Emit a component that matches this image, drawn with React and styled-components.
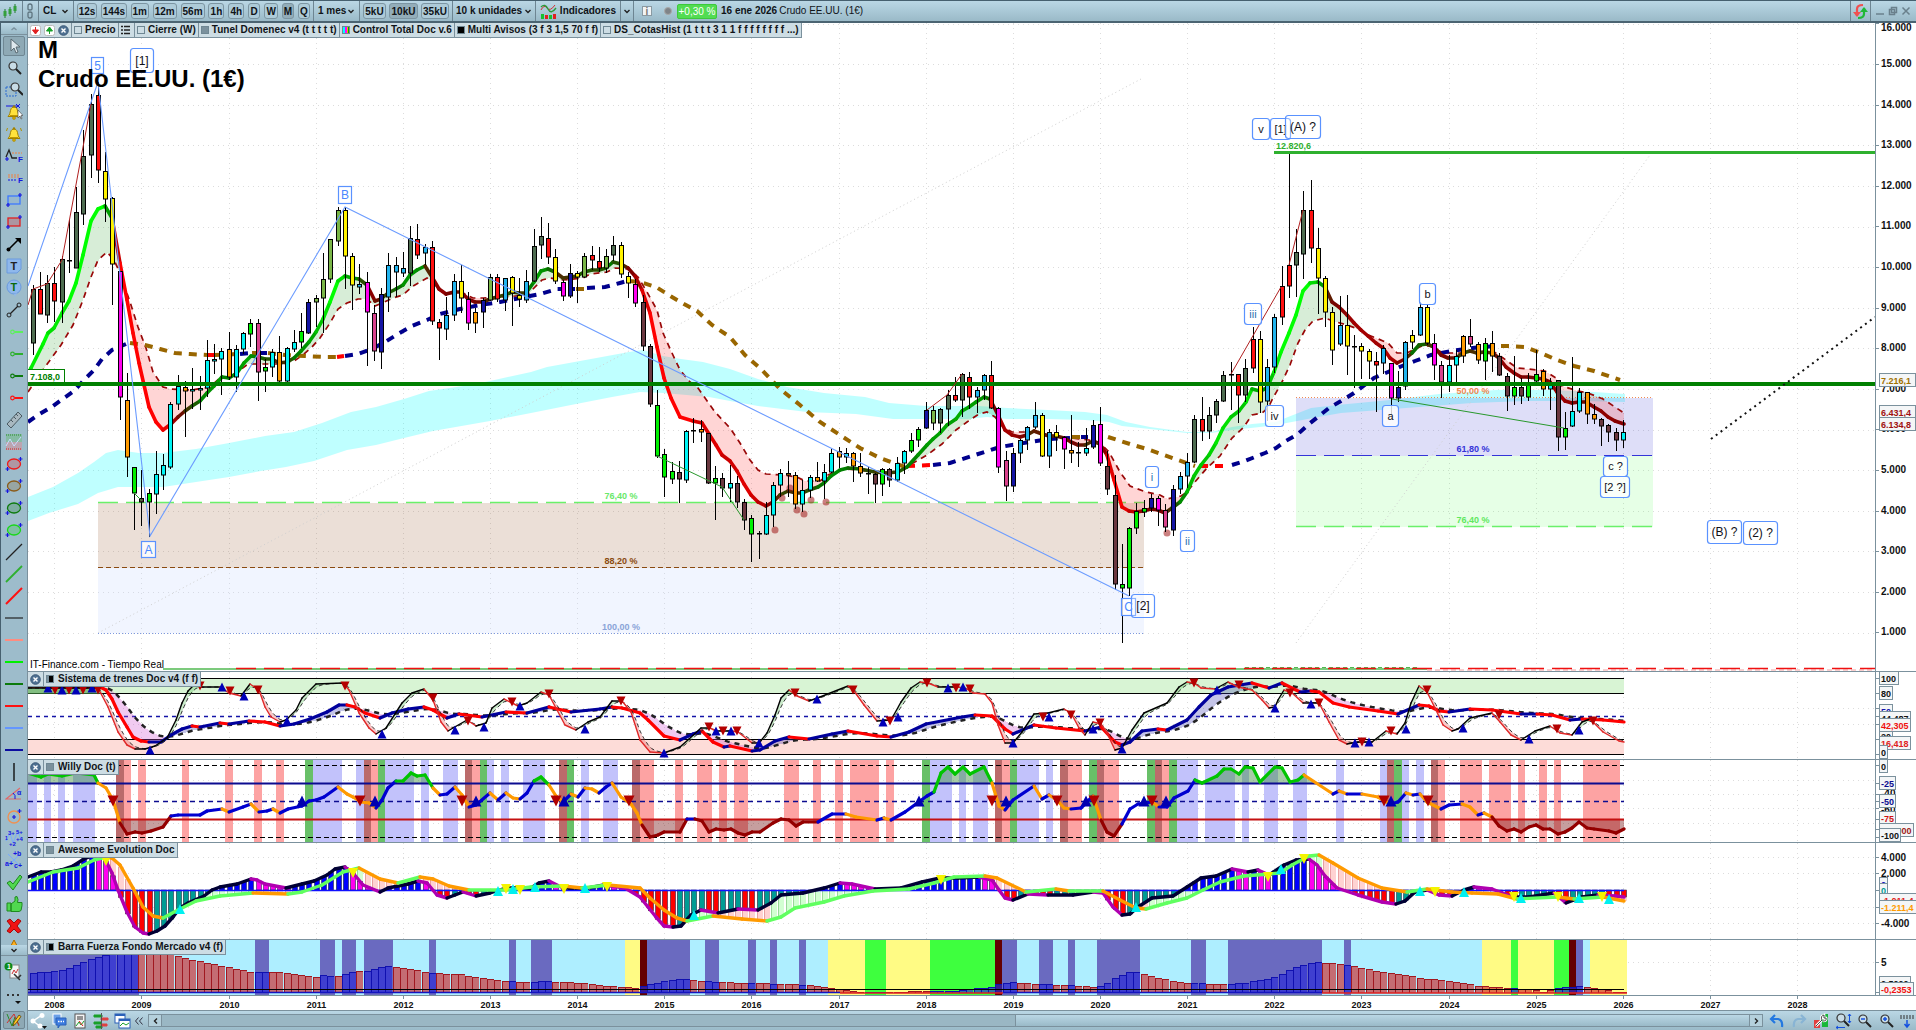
import React from "react";
import styled, { createGlobalStyle, css } from "styled-components";

const Global = createGlobalStyle`
  * { box-sizing: border-box; }
  body { margin: 0; overflow: hidden; background: #9dbccb; }
  button, select { font: inherit; color: inherit; margin: 0; }
`;

const FONT = '"Liberation Sans", Arial, sans-serif';
const EDGE = "#7b919d";

/* ---------- time scale ---------- */
const X0 = 55.3;
const MONTH = 7.262;
const mx = (k) => Math.round(X0 + MONTH * k);
const FIRST = -3;
const LAST = 216;
const END = mx(LAST);
const YEARS = Array.from({ length: 21 }, (_, i) => 2008 + i);

const parse = (s) => s.trim().split(/\s+/).map((p) => p.split(",").map(Number));
const toPoly = (a) => a.map((p) => p.join(",")).join(" ");
const at = (pts, x) => {
  if (x <= pts[0][0]) return pts[0][1];
  for (let i = 1; i < pts.length; i++) {
    if (x <= pts[i][0]) {
      const [x0, y0] = pts[i - 1];
      const [x1, y1] = pts[i];
      return x1 === x0 ? y1 : y0 + ((y1 - y0) * (x - x0)) / (x1 - x0);
    }
  }
  return pts[pts.length - 1][1];
};

/* ---------- price data: wick top, body top, body bottom, wick bottom, colour ---------- */
const CANDLE_COLORS = {
  g: "#4e6c50", r: "#ff1010", y: "#fff200", m: "#ff00f0", o: "#ff9a00", l: "#00f000",
  p: "#6b3840", c: "#00f4f4", k: "#d8428c", b: "#1414a4", s: "#22b4ee", e: "#7ab648",
};
const CANDLES = `285 289 343 355 g,272 289 314 314 r,275 283 315 323 g,267 283 301 322 r,256 259 302 323 g,220 260 261 273 g,187 212 268 268 g,130 156 214 225 g,94 104 155 178 g,82 95 170 183 r,152 171 199 222 y,197 198 264 305 y,271 271 397 420 m,373 400 457 477 o,467 467 493 530 l,470 498 502 526 p,489 493 502 537 l,451 474 494 514 c,454 465 475 490 c,402 404 467 469 c,375 386 404 410 c,381 387 391 437 o,368 389 391 409 c,376 388 390 410 c,
340 360 388 397 c,344 359 361 374 c,348 351 359 395 c,332 349 377 380 o,345 349 377 392 c,332 333 349 354 c,319 323 334 347 l,319 323 372 401 k,359 367 371 392 l,349 352 367 377 c,336 352 381 383 o,347 348 381 383 c,330 342 349 352 c,313 331 342 348 l,299 302 333 334 b,295 298 302 327 e,253 279 298 333 e,239 239 279 283 e,207 210 241 246 e,207 210 256 289 y,253 256 285 310 y,264 284 287 294 s,272 282 312 366 m,305 313 351 361 k,288 294 352 369 b,253 265 297 312 s,257 265 272 297 s,252 268 273 277 s,226 238 273 286 g,224 239 255 259 r,244 247 253 265 s,
241 247 321 325 r,319 322 328 360 r,297 315 329 340 s,274 281 315 321 s,265 281 298 313 y,292 299 323 330 m,308 312 323 333 o,298 300 312 328 b,274 277 300 301 e,274 277 299 302 r,278 278 300 311 s,276 277 293 326 y,278 295 299 307 y,270 281 300 303 s,229 246 281 282 g,217 236 245 259 g,223 238 257 264 r,249 257 281 284 y,280 282 296 301 m,264 273 296 298 b,271 273 277 303 y,253 256 277 278 e,246 255 260 270 r,247 261 268 272 r,249 256 268 273 e,236 245 255 261 g,242 245 274 278 y,272 276 283 298 y,279 284 303 307 m,295 302 346 351 p,344 346 404 407 p,390 405 456 458 l,
449 454 477 497 l,462 471 479 484 l,461 472 479 503 p,430 431 480 483 c,418 430 431 443 g,420 429 432 442 o,433 433 483 484 p,466 478 483 520 l,473 478 488 497 p,465 483 488 502 c,476 483 502 508 p,499 502 520 530 p,515 518 534 562 l,531 533 534 559 g,502 515 534 535 c,482 485 515 527 c,469 473 485 497 c,461 473 475 497 o,472 475 504 509 o,480 490 504 512 c,475 477 490 498 c,462 477 481 482 o,464 472 481 499 c,449 453 472 473 c,447 451 457 468 o,448 453 457 463 c,452 453 466 482 o,453 466 473 477 o,467 473 474 494 g,473 474 484 503 p,468 469 484 496 l,468 469 480 487 p,457 463 480 482 c,450 451 463 474 c,433 440 451 453 l,427 429 440 447 l,
402 410 428 429 b,406 410 423 430 e,408 409 423 433 g,390 395 409 426 g,377 395 400 402 r,373 374 400 417 g,372 377 397 409 r,387 390 397 413 s,374 375 390 400 s,361 375 408 409 r,407 408 467 473 m,451 460 486 501 k,448 453 486 492 b,439 440 453 463 s,426 427 440 450 s,402 415 427 429 s,413 415 456 457 y,429 432 456 468 s,425 432 437 451 y,436 437 449 469 m,415 450 453 463 o,442 452 453 467 g,428 448 453 456 c,420 425 447 449 b,407 424 463 466 m,451 466 489 495 p,475 495 584 590 p,544 584 588 643 l,527 528 588 596 l,503 511 528 534 l,500 508 512 517 l,494 498 508 512 b,496 498 510 526 m,504 510 527 532 k,485 489 530 536 b,472 476 489 494 s,
453 462 476 488 s,415 419 462 463 g,397 419 431 441 r,407 415 431 439 g,399 401 415 423 g,371 375 401 402 g,362 374 375 410 g,374 374 395 423 r,359 368 395 402 g,327 339 368 373 r,331 339 402 413 y,359 367 401 421 s,314 317 367 373 s,266 286 317 325 r,154 265 286 298 r,229 252 265 297 g,191 210 254 279 g,180 210 248 263 r,228 248 278 314 y,276 278 312 327 y,307 312 350 365 y,296 325 344 346 s,295 325 346 375 y,335 346 347 388 g,343 346 351 379 y,349 351 361 379 y,352 361 365 412 r,345 348 363 374 s,363 363 398 415 m,371 387 398 402 b,341 342 386 390 s,330 335 342 349 y,302 307 335 336 s,304 307 343 345 y,334 343 365 380 m,361 365 382 398 k,
355 365 382 392 c,350 356 365 382 c,335 336 356 363 o,319 336 344 347 k,342 344 360 364 o,338 343 361 380 l,331 343 356 372 o,353 356 375 376 p,373 376 396 411 p,356 387 396 405 l,378 387 396 404 p,373 385 397 401 l,350 374 381 383 l,369 371 389 396 o,378 384 389 410 c,380 380 437 451 p,412 428 437 450 l,357 411 426 427 c,388 392 411 413 c,392 392 414 424 o,404 414 419 424 o,418 419 426 446 p,424 425 432 442 p,428 432 440 451 p,420 432 440 448 c`
  .split(",")
  .map((r) => {
    const [wt, bt, bb, wb, c] = r.trim().split(/\s+/);
    return { wt: +wt, bt: +bt, bb: +bb, wb: +wb, c };
  });

const MA = parse(`28,374 31,368 43,344 48,333 54,328 62,313 69,301 76,283 83,255 91,221 98,209 105,206 112,218 120,263 127,300 133,333 139,363 149,407 156,422 163,430 171,424 178,417 185,411 192,406 200,401 207,393 214,386 222,377 229,378 237,373 244,363 251,356 258,357 265,359 272,359 279,363 287,362 294,358 301,351 309,342 316,332 323,319 330,302 338,281 345,276 352,278 359,279 367,285 375,301 381,299 388,293 396,289 403,285 410,275 417,270 425,266 432,277 439,289 446,294 454,292 461,292 468,299 475,302 483,302 490,299 497,297 505,295 512,292 519,293 526,293 534,282 541,271 548,269 555,272 563,278 570,277 577,276 584,272 592,270 599,270 606,268 613,262 621,264 628,268 635,276 642,290 650,313 657,347 664,378 671,398 680,417 693,421 702,423 709,434 716,445 722,455 730,461 737,471 744,484 751,495 758,502 766,506 773,502 780,495 788,491 796,493 802,493 809,490 818,487 824,483 831,476 840,470 848,468 860,469 875,472 885,473 898,472 907,467 918,455 927,445 933,439 940,433 947,425 956,419 962,411 969,407 976,402 984,397 990,399 998,415 1005,430 1012,435 1020,437 1027,435 1034,431 1042,434 1049,436 1056,436 1064,438 1071,442 1078,445 1085,445 1093,441 1100,444 1107,455 1114,480 1122,507 1129,511 1136,512 1143,511 1151,509 1158,510 1165,513 1172,508 1180,502 1187,492 1194,476 1201,465 1209,455 1216,443 1223,428 1231,417 1239,411 1246,402 1252,389 1260,391 1267,388 1274,372 1281,352 1289,333 1296,315 1303,291 1310,283 1318,282 1325,287 1332,302 1339,307 1347,315 1354,323 1361,330 1368,336 1376,343 1383,348 1390,358 1397,363 1405,359 1412,353 1419,345 1427,344 1434,347 1441,355 1448,358 1456,358 1463,353 1470,351 1477,353 1485,352 1492,353 1499,358 1506,367 1514,373 1521,377 1528,377 1543,379 1550,382 1557,392 1565,401 1572,403 1579,402 1586,402 1594,407 1601,411 1608,417 1615,421 1624,424`);
const MA_DASH = parse(`28,392 45,367 61,345 73,325 83,300 91,277 98,260 107,252 114,260 120,273 130,302 138,327 146,348 153,372 163,387 171,389 192,390 210,387 220,378 230,378 240,370 248,364 283,364 294,361 303,355 312,347 320,338 330,323 338,309 347,303 358,299 367,299 375,306 382,303 393,298 403,295 413,286 427,278 432,282 439,290 446,294 461,292 473,298 483,298 505,297 527,295 534,288 542,280 550,278 563,280 583,278 590,274 607,272 615,268 628,269 638,277 647,292 657,310 663,333 672,353 680,370 690,382 698,388 710,405 715,412 730,428 740,443 750,460 758,470 766,474 783,475 797,477 805,481 820,481 828,475 840,470 848,469 875,472 898,473 913,463 927,455 942,444 956,430 967,422 979,414 987,412 995,417 1003,427 1012,432 1034,432 1049,435 1064,437 1079,439 1089,440 1100,443 1109,452 1120,472 1130,486 1146,492 1160,495 1167,499 1181,496 1187,492 1194,483 1207,468 1220,456 1232,438 1243,428 1252,415 1262,413 1268,408 1273,398 1282,382 1290,365 1298,343 1305,330 1313,321 1325,318 1333,321 1347,325 1358,329 1368,335 1376,338 1388,343 1397,353 1407,353 1413,350 1422,346 1430,346 1443,353 1460,353 1470,352 1493,351 1503,358 1517,368 1528,369 1545,371 1556,378 1562,386 1578,391 1588,393 1603,399 1615,407 1624,413`);
const TREND = [
  ["n", "28,422 38,415 53,406 64,398 74,391 84,380 94,370 102,359 112,350 126,344"],
  ["d", "130,343 145,345 160,349 175,353 190,354 207,355"],
  ["r", "207,355 214,355"],
  ["d", "214,355 240,354"],
  ["n", "240,354 252,353"],
  ["d", "252,353 260,353"],
  ["n", "260,353 267,353"],
  ["d", "268,353 285,355 305,356 325,357 337,357"],
  ["r", "337,357 344,356"],
  ["n", "345,356 358,354 372,349 385,342 398,334 412,326 427,320 440,314 460,309 480,305 500,302 520,298 540,294 557,289 575,289"],
  ["d", "576,289 586,289"],
  ["n", "587,288 605,287 620,283 627,281"],
  ["d", "629,281 640,282 656,287 672,297 684,304 697,311 712,325 730,337 745,355 762,370 780,389 800,405 820,422 840,435 860,448 880,458 905,467"],
  ["r", "907,466 933,465"],
  ["n", "933,465 950,463 975,455 1000,447 1030,442 1050,439 1070,438"],
  ["d", "1072,437 1080,437"],
  ["n", "1081,437 1088,437"],
  ["d", "1108,437 1130,444 1150,450 1175,459 1195,466"],
  ["r", "1200,466 1225,466"],
  ["n", "1232,465 1245,461 1265,453 1276,448 1284,442 1298,434 1309,424 1319,416 1329,408 1341,401 1354,393 1374,378 1388,372 1402,366 1415,361 1431,355 1451,351 1480,347 1498,346"],
  ["d", "1501,346 1509,346 1525,347 1541,353 1557,360 1574,366 1594,371 1620,380"],
];
const TREND_COLORS = { n: "#00008c", d: "#996600", r: "#ff0000" };
const BAND_TOP = parse(`28,497 53,487 78,473 94,462 106,453 118,450 139,453 163,453 196,449 229,443 265,436 294,432 322,423 351,412 376,407 404,399 429,391 470,385 490,381 531,372 547,367 580,361 629,352 643,350 663,356 681,359 703,362 730,369 758,379 787,387 824,393 865,397 889,403 926,406 979,406 1007,408 1048,410 1085,412 1107,415 1126,422 1150,427 1187,432 1211,432 1232,427 1252,424 1276,422 1288,417 1311,408 1337,405 1390,400 1439,394 1496,390 1554,390 1594,392 1625,394`);
const BAND_BOTTOM = parse(`28,521 49,513 78,504 98,493 118,487 163,487 196,482 229,477 261,471 286,467 314,461 347,450 376,445 404,438 433,431 490,421 531,413 571,405 612,397 640,392 664,393 709,397 730,401 758,406 807,412 856,414 893,419 967,419 987,417 1007,419 1048,419 1085,420 1109,422 1122,426 1187,433 1211,433 1232,430 1260,427 1276,425 1313,418 1341,413 1419,407 1472,403 1529,401 1582,401 1625,402`);
const DOTS = parse("782,498 790,488 797,510 804,514 811,500 826,502 775,530 1167,533");

/* ---------- oscillator data ---------- */
const TRAIN_SLOW = parse(`28,686 100,687 106,690 112,699 118,712 127,727 133,737 141,741 149,742 161,742 171,735 182,729 192,726 200,727 220,723 229,724 249,721 265,722 280,726 294,724 310,719 327,712 339,705 347,705 355,707 365,713 380,718 392,713 408,709 424,707 433,710 447,718 459,714 482,717 506,712 527,713 549,707 571,712 600,709 612,707 622,708 640,713 648,720 664,736 680,740 693,734 702,731 713,742 724,747 730,746 752,751 760,750 775,741 789,737 809,739 832,734 848,731 877,736 891,737 909,732 926,724 962,717 975,715 992,716 1005,729 1013,734 1034,725 1056,728 1085,731 1101,727 1115,742 1122,745 1130,742 1142,731 1158,729 1167,730 1187,720 1199,707 1211,695 1228,687 1252,683 1269,688 1282,683 1300,692 1311,691 1319,692 1333,703 1349,707 1378,711 1398,714 1419,705 1429,706 1439,711 1449,712 1470,709 1492,710 1521,714 1537,714 1552,715 1570,720 1582,719 1603,720 1624,722`);
const TRAIN_FAST = parse(`28,688 98,688 108,707 118,732 127,745 135,749 145,749 155,746 167,738 176,720 182,703 188,691 194,685 202,687 220,687 229,693 241,696 250,684 259,690 265,707 271,717 280,722 286,720 296,710 302,698 316,684 343,683 349,690 359,713 369,728 376,734 386,728 402,703 412,693 424,689 433,700 441,722 448,731 453,728 467,720 476,726 486,723 492,708 504,699 512,703 518,706 527,703 541,692 549,695 557,710 565,725 576,730 588,722 600,717 612,701 622,701 631,712 640,740 650,752 664,753 680,747 689,739 701,728 710,728 716,731 731,731 738,732 752,743 759,743 767,733 775,715 781,698 789,690 797,696 809,701 820,697 848,686 854,691 864,705 877,721 891,720 901,702 911,688 920,682 928,683 938,687 958,687 967,689 973,693 985,694 992,703 998,725 1005,743 1013,743 1022,732 1034,714 1048,713 1064,709 1071,713 1079,728 1085,735 1093,722 1101,724 1107,733 1115,750 1122,748 1132,730 1144,713 1167,703 1179,687 1187,682 1194,683 1201,688 1215,689 1228,682 1238,687 1252,690 1262,700 1269,708 1275,707 1278,700 1284,690 1292,693 1303,703 1319,703 1329,722 1339,740 1347,744 1358,742 1372,742 1386,731 1397,734 1405,723 1411,703 1419,686 1427,692 1435,708 1443,725 1452,731 1458,729 1470,718 1492,713 1500,722 1511,735 1521,740 1535,731 1550,726 1560,733 1572,735 1582,722 1590,719 1603,732 1619,741 1624,742`);
const TRAIN_DOWN = parse("55,690 69,690 83,690 98,690 200,686 230,691 258,690 345,686 433,698 468,721 512,702 549,694 621,701 709,727 723,731 737,731 795,693 853,690 890,721 927,683 956,688 970,689 1043,717 1071,715 1100,723 1194,683 1239,685 1290,693 1319,703 1391,731 1362,742 1427,690 1499,715 1557,729 1593,721");
const TRAIN_UP = parse("48,688 62,690 76,690 92,688 222,687 244,696 287,721 150,750 382,734 455,730 484,727 520,706 585,729 664,753 716,731 731,731 759,743 817,699 883,722 898,717 948,688 963,687 1013,743 1049,717 1093,729 1122,749 1217,690 1275,708 1311,704 1355,743 1369,742 1406,729 1463,728 1529,739 1579,730");

const WILLY = parse(`28,773 41,777 48,774 62,776 76,773 94,775 98,783 106,788 113,800 120,823 127,834 135,832 142,833 151,831 163,827 171,816 178,815 200,815 207,811 222,809 229,812 243,807 251,804 259,812 267,811 273,809 280,813 288,809 302,806 309,801 316,800 324,797 338,787 347,794 353,797 361,802 369,803 376,808 382,800 388,788 396,781 403,781 411,773 417,776 425,775 433,788 440,795 447,794 455,787 462,795 469,807 476,805 490,793 498,800 506,793 513,798 520,799 527,793 534,781 541,777 549,785 556,796 563,802 571,794 578,797 585,788 592,789 599,793 606,787 612,783 621,797 631,804 637,813 642,825 650,837 658,835 664,832 680,832 687,819 695,819 702,821 709,832 716,829 724,830 731,829 738,833 745,835 752,832 760,832 773,823 781,819 789,820 796,826 803,822 818,822 832,814 846,814 856,817 877,820 884,818 891,820 905,812 920,801 927,796 934,792 941,773 948,767 955,774 963,767 970,774 984,767 992,783 999,806 1005,810 1013,800 1034,786 1042,799 1049,795 1057,800 1064,808 1071,809 1081,808 1093,796 1101,820 1107,832 1114,836 1122,824 1130,809 1138,804 1152,802 1159,807 1167,807 1174,798 1188,791 1195,780 1202,783 1217,776 1224,769 1231,769 1239,774 1245,767 1253,768 1260,782 1275,767 1282,768 1290,782 1298,780 1304,775 1333,794 1339,791 1347,794 1362,794 1378,797 1390,804 1398,802 1406,793 1413,795 1420,794 1427,802 1441,809 1449,805 1462,804 1470,807 1478,815 1484,813 1492,817 1499,826 1507,831 1514,829 1521,832 1529,827 1536,825 1543,829 1550,829 1558,834 1565,832 1572,828 1579,822 1587,828 1594,829 1609,831 1616,833 1624,829`);
const WILLY_COLORS = { v: "#c2c2fb", p: "#fda3a3", d: "#bb6b6b", g: "#68c068" };
const WILLY_BANDS = `v 28 37,v 44 51,v 58 65,v 73 95,d 116 124,p 124 131,p 138 146,p 182 189,p 225 233,p 254 262,p 276 284,g 305 313,v 313 342,v 356 364,d 364 371,p 371 378,g 378 385,v 385 414,v 421 429,v 443 458,d 465 472,p 472 480,g 480 487,v 487 494,v 501 509,v 523 545,d 559 567,g 567 574,v 581 589,v 603 618,d 632 640,p 640 654,p 675 683,p 697 712,p 719 727,p 734 748,p 784 799,p 813 821,p 835 843,p 850 879,p 886 894,g 922 930,v 930 952,v 959 966,v 973 988,d 995 1002,p 1002 1010,g 1010 1017,v 1017 1039,v 1046 1053,d 1060 1068,p 1068 1082,g 1089 1097,d 1097 1104,p 1104 1119,g 1147 1155,d 1155 1162,p 1162 1169,g 1169 1177,v 1177 1198,v 1205 1235,v 1242 1249,v 1264 1278,v 1293 1307,v 1336 1344,v 1380 1387,d 1387 1394,g 1394 1402,v 1402 1409,v 1416 1424,d 1431 1438,p 1438 1445,p 1460 1482,p 1489 1511,p 1518 1525,p 1539 1547,p 1554 1561,p 1583 1620`
  .split(",")
  .map((b) => b.split(" "));
const WILLY_DOWN = [113, 360, 462, 556, 629, 992, 1057, 1094, 1152, 1384, 1428];
const WILLY_UP = [302, 375, 476, 564, 919, 1006, 1086, 1144, 1166, 1391];

const AO = parse(`28,877 41,872 51,872 61,870 73,866 84,859 94,855 104,857 112,873 118,890 127,912 135,927 143,933 149,934 157,931 165,926 173,917 180,908 188,903 204,896 212,890 220,887 237,884 251,879 257,880 265,884 286,888 302,884 314,881 327,875 335,869 345,867 353,873 363,885 380,892 388,888 408,884 418,881 427,883 437,895 447,898 455,895 463,892 476,896 490,893 506,888 531,888 539,883 549,881 563,888 588,888 604,885 625,888 640,897 648,907 656,917 664,926 673,927 681,926 691,915 701,910 718,913 738,909 758,910 771,903 781,895 803,893 824,888 840,883 852,884 875,889 901,888 922,882 940,878 958,878 979,877 992,880 999,890 1005,898 1013,900 1028,894 1048,895 1073,895 1093,892 1103,893 1113,907 1122,915 1130,914 1138,907 1152,898 1173,896 1187,887 1201,878 1216,876 1232,869 1248,872 1258,870 1269,875 1284,865 1296,860 1309,859 1317,865 1325,876 1337,888 1358,895 1382,902 1396,904 1405,901 1415,892 1427,890 1439,895 1452,896 1464,890 1474,887 1492,889 1513,897 1529,897 1554,893 1566,903 1582,897 1598,895 1615,896 1624,897`);
const AO_SIGNAL = parse(`28,882 53,872 78,868 94,860 106,857 112,858 120,865 133,888 143,907 153,916 163,918 178,910 196,901 220,896 253,893 288,894 302,892 322,885 343,872 359,868 380,879 398,883 420,877 433,879 449,886 469,890 506,890 531,887 563,886 582,888 608,885 640,888 650,898 664,910 677,918 687,921 713,916 742,919 767,921 781,917 795,908 824,902 844,896 873,891 909,889 934,883 954,877 985,876 997,878 1026,892 1056,889 1069,891 1103,891 1120,900 1136,908 1146,909 1167,903 1187,898 1203,890 1220,882 1244,876 1269,874 1280,873 1292,865 1309,856 1319,855 1333,863 1358,878 1382,888 1407,892 1427,889 1452,892 1472,893 1498,894 1517,899 1558,897 1574,899 1603,897 1624,901`);
const AO_DOWN = parse("106,861 353,873 506,889 520,890 564,889 607,887 941,880 1268,877 1304,859 1435,892 1514,897 1558,897 1602,897");
const AO_UP = parse("180,909 498,891 513,889 535,887 585,888 694,915 1136,907 1281,869 1420,891 1464,892 1521,898 1579,898 1609,899");

const FORCE = parse(`28,974 62,970 78,965 86,961 106,955 130,953 171,954 184,958 204,962 229,967 253,972 280,972 302,975 316,977 322,975 339,976 351,972 367,971 388,966 412,969 429,973 461,974 482,978 502,981 527,982 547,981 580,983 612,986 640,988 644,986 664,981 685,979 705,981 746,983 795,984 820,986 844,989 860,992 958,991 967,989 991,987 1003,983 1013,982 1036,984 1069,985 1097,987 1109,983 1118,977 1128,972 1138,972 1154,977 1187,983 1224,984 1244,983 1277,977 1284,973 1300,966 1319,962 1345,964 1374,970 1403,975 1431,979 1456,982 1482,986 1509,988 1529,989 1547,992 1554,988 1582,986 1598,988 1619,992 1624,992`);
const FORCE_COLORS = { p: "#6a6ac0", l: "#aeeeff", y: "#fffb84", g: "#3eff3e", d: "#640000" };
const FORCE_BANDS = `p 28 139,l 139 255,p 255 269,l 269 320,p 320 335,l 335 342,p 342 356,l 356 364,p 364 393,l 393 429,p 429 436,l 436 509,p 509 516,l 516 531,p 531 552,l 552 625,y 625 640,d 640 647,p 647 690,l 690 705,p 705 719,l 719 748,p 748 756,l 756 770,p 770 777,l 777 799,p 799 806,l 806 828,y 828 865,g 865 886,y 886 930,g 930 995,d 995 1002,p 1002 1017,l 1017 1039,p 1039 1053,l 1053 1068,p 1068 1075,l 1075 1097,p 1097 1140,l 1140 1191,p 1191 1206,l 1206 1228,p 1228 1322,l 1322 1344,p 1344 1351,l 1351 1482,y 1482 1511,g 1511 1518,y 1518 1554,g 1554 1569,d 1569 1576,p 1576 1583,l 1583 1590,y 1590 1627`
  .split(",")
  .map((b) => b.split(" "));

/* ---------- layout ---------- */
const Page = styled.div`
  display: flex;
  flex-direction: column;
  height: 100vh;
  font: bold 10px/12px ${FONT};
  color: #101418;
  background: #9dbccb;
`;
const bar = css`
  display: flex;
  align-items: center;
  background: linear-gradient(#bad7e5, #9abac8);
`;
const TopBar = styled.header`
  ${bar}
  height: 23px;
  flex: none;
  border-top: 1px solid #46606f;
  border-bottom: 2px solid #4b6472;
`;
const Group = styled.div`
  display: flex;
  align-items: center;
  height: 100%;
  flex: none;
  justify-content: ${(p) => (p.$start ? "flex-start" : "space-between")};
  width: ${(p) => p.$w}px;
  padding: 0 ${(p) => (p.$pad === undefined ? 4 : p.$pad)}px;
  border-right: 1px solid ${(p) => (p.$plain ? "transparent" : "#6d8592")};
  white-space: nowrap;
`;
const TimeButton = styled.button`
  height: 16px;
  padding: 0;
  flex: none;
  width: ${(p) => p.$w}px;
  border: 1px solid #7c95a2;
  border-radius: 3px;
  background: ${(p) => (p.$on ? "#93adb9" : "#aecbd8")};
  line-height: 13px;
  display: flex;
  justify-content: center;
  align-items: center;
`;
const MenuButton = styled.button`
  display: flex;
  align-items: center;
  justify-content: ${(p) => (p.$center ? "center" : "space-between")};
  width: 100%;
  border: 0;
  padding: 0;
  background: none;
  white-space: nowrap;

  svg {
    flex: none;
  }
`;
const Spacer = styled.div`
  flex: 1;
`;
const Change = styled.span`
  flex: none;
  width: 40px;
  height: 15px;
  line-height: 13px;
  text-align: center;
  color: #fff;
  font-weight: normal;
  background: #52dc52;
  border: 1px solid #3cc83c;
  border-radius: 2px;
`;
const Plain = styled.span`
  font-weight: normal;
`;
const InfoMark = styled.span`
  flex: none;
  width: 10px;
  height: 10px;
  margin-right: 12px;
  border: 1px solid #8a9aa2;
  background: #f2f4f5;
  color: #777;
  text-align: center;
  line-height: 9px;
`;
const StateDot = styled.span`
  flex: none;
  width: 8px;
  height: 8px;
  margin-right: 5px;
  border-radius: 50%;
  background: #7f8488;
  border: 1px solid #a9a9a9;
`;
const DateText = styled.time`
  margin: 0 2px 0 4px;
`;
const IconButton = styled.button`
  display: flex;
  align-items: center;
  justify-content: center;
  flex: none;
  width: ${(p) => p.$w || 22}px;
  height: ${(p) => p.$h || 20}px;
  padding: 0;
  border: 1px solid ${(p) => (p.$on ? "#6f8793" : "transparent")};
  border-radius: 2px;
  background: ${(p) => (p.$on ? "#8ea9b5" : "none")};
`;
const Body = styled.div`
  display: flex;
  flex: 1;
  min-height: 0;
`;
const SideBar = styled.nav`
  display: flex;
  flex-direction: column;
  align-items: center;
  flex: none;
  width: 28px;
  border-left: 1px solid #46606f;
  border-right: 1px solid ${EDGE};
  background: #9dbccb;
`;
const ToolList = styled.div`
  display: flex;
  flex-direction: column;
  align-items: center;
  flex: 1;
  min-height: 0;
  overflow: hidden;
  gap: 2px;
  padding-top: 1px;
`;
const SideStrip = styled.div`
  ${bar}
  flex: none;
  width: 100%;
  height: ${(p) => p.$h}px;
  justify-content: center;
  border-bottom: 1px solid ${(p) => (p.$plain ? "transparent" : EDGE)};
  ${(p) => p.$plain && "background: none;"}
`;
const Main = styled.main`
  display: flex;
  flex-direction: column;
  flex: 1;
  min-width: 0;
`;
const Row = styled.section`
  position: relative;
  display: flex;
  background: #fff;
  min-height: 0;
  ${(p) => (p.$h ? `flex: none; height: ${p.$h}px; border-top: 1px solid ${EDGE};` : "flex: 1;")}
`;
const Plot = styled.svg`
  display: block;
  flex: 1;
  min-width: 0;
  height: 100%;
  overflow: hidden;
`;
const Scale = styled.svg`
  display: block;
  flex: none;
  width: 41px;
  height: 100%;
  overflow: hidden;
`;
const Tabs = styled.div`
  position: absolute;
  top: 0;
  left: 0;
  display: flex;
  height: 15px;
  border-bottom: 1px solid ${EDGE};
  background: #cddde4;
  white-space: nowrap;
`;
const Tab = styled.div`
  display: flex;
  align-items: center;
  gap: 3px;
  padding: 0 2px;
  flex: none;
  width: ${(p) => (p.$w ? `${p.$w}px` : "auto")};
  border-right: 1px solid ${EDGE};
`;
const CloseTab = styled.button`
  display: flex;
  align-items: center;
  justify-content: center;
  width: 16px;
  padding: 0;
  border: 0;
  border-right: 1px solid ${EDGE};
  background: none;
`;
const PanelTitle = styled.div`
  display: flex;
  align-items: center;
  gap: 4px;
  padding: 0 2px;
  border-right: 1px solid ${EDGE};
`;
const Swatch = styled.span`
  flex: none;
  width: 8px;
  height: 8px;
  border: 1px solid #6f8793;
  background: ${(p) => p.$fill || "transparent"};
`;
const Heading = styled.h1`
  position: absolute;
  top: 12px;
  left: 10px;
  margin: 0;
  font: bold 24px/29px ${FONT};
  color: #000;
  pointer-events: none;
`;
const Credit = styled.div`
  position: absolute;
  left: 2px;
  bottom: 0;
  font-weight: normal;
  color: #000;
`;
const TimeRow = styled.div`
  display: flex;
  flex: none;
  height: 15px;
  background: #fff;
  border-top: 1px solid ${EDGE};
`;
const BottomBar = styled.footer`
  ${bar}
  flex: none;
  height: 20px;
  border-top: 1px solid ${EDGE};
`;
const BottomGroup = styled.div`
  display: flex;
  align-items: center;
  flex: none;
  ${(p) => (p.$right ? "" : "gap: 1px;")}
`;
const ScrollBar = styled.div`
  display: flex;
  flex: 1;
  height: 13px;
  margin: 0 3px;
  border: 1px solid ${EDGE};
`;
const ScrollEnd = styled.button`
  width: 13px;
  padding: 0;
  border: 0;
  border-right: 1px solid ${(p) => (p.$first ? EDGE : "transparent")};
  border-left: 1px solid ${(p) => (p.$first ? "transparent" : EDGE)};
  background: #b4d0dc;
  display: flex;
  align-items: center;
  justify-content: center;
`;
const Track = styled.div`
  flex: ${(p) => p.$grow};
  border-left: ${(p) => (p.$thumb ? `1px solid ${EDGE}` : "0")};
  background: ${(p) => (p.$thumb ? "linear-gradient(#bad7e5, #9abac8)" : "#9ab7c4")};
`;

/* ---------- small icons ---------- */
const Ico = ({ w = 18, h = 18, vb, children }) => (
  <svg width={w} height={h} viewBox={vb || `0 0 ${w} ${h}`} fill="none" aria-hidden="true">
    {children}
  </svg>
);
const Chevron = ({ up, dir }) => (
  <Ico w={8} h={8}>
    <path
      d={dir === "l" ? "M5 1.5L2.5 4L5 6.5" : dir === "r" ? "M3 1.5L5.5 4L3 6.5" : up ? "M1.5 5L4 3L6.5 5" : "M1.5 3L4 5.5L6.5 3"}
      stroke={up ? "#7b919d" : "#222"}
      strokeWidth="1.4"
    />
  </Ico>
);
const CloseDot = () => (
  <Ico w={11} h={11}>
    <circle cx="5.5" cy="5.5" r="4.8" fill="#4f7192" stroke="#3c5a78" />
    <path d="M3.5 3.5l4 4m0-4l-4 4" stroke="#fff" strokeWidth="1.4" />
  </Ico>
);
const Plus = ({ x, y }) => <path d={`M${x - 2} ${y}h4M${x} ${y - 2}v4`} stroke="#1414e0" strokeWidth="1.2" />;
const lens = (x = 7, y = 7) => (
  <>
    <circle cx={x} cy={y} r="4" fill="#c8dce6" stroke="#333" strokeWidth="1.2" />
    <path d={`M${x + 3} ${y + 3}l5 5`} stroke="#222" strokeWidth="2" />
  </>
);
const bell = (
  <>
    <path d="M3 13.500c2-2 2-4 2.500-6C6 4.500 8 4 9 4s3 .5 3.500 3.500c.5 2 .5 4 2.500 6z" fill="#ffe23c" stroke="#a08000" />
    <path d="M5 12.500h8" stroke="#c09800" />
    <circle cx="9" cy="15" r="1.500" fill="#d0a800" stroke="#a08000" strokeWidth=".5" />
    <circle cx="9" cy="3.500" r="1.200" fill="#a08000" />
  </>
);
const ellipse = (c) => (
  <Ico>
    <ellipse cx="9" cy="9" rx="6.500" ry="5" stroke={c} strokeWidth="1.300" fill={c} fillOpacity=".22" />
    <Plus x={2.5} y={14} />
    <Plus x={15.5} y={4} />
  </Ico>
);
const rectTool = (c, o) => (
  <Ico>
    <rect x="3" y="5" width="12" height="8" stroke={c} strokeWidth="1.300" fill={c} fillOpacity={o} />
    <Plus x={3} y={14} />
    <Plus x={15} y={4} />
  </Ico>
);
const diag = (c, w) => (
  <Ico>
    <path d="M1 17L17 1" stroke={c} strokeWidth={w} />
  </Ico>
);
const hline = (c, w) => (
  <Ico>
    <path d="M0 9H18" stroke={c} strokeWidth={w} />
  </Ico>
);
const ray = (c) => (
  <Ico>
    <circle cx="7.500" cy="9" r="1.800" stroke={c} strokeWidth="1.200" />
    <path d="M9.500 9H18" stroke={c} strokeWidth="2" />
  </Ico>
);
const glyph = (x, y, t, size = 6, fill = "#1414e0") => (
  <text x={x} y={y} fontSize={size} fontWeight="bold" fill={fill} fontFamily={FONT}>
    {t}
  </text>
);

const TOOLS = [
  ["Seleccionar", <Ico><path d="M6 2v12l3-3 2 5 2-1-2-5h4z" fill="#dfe9ee" stroke="#5a6a72" /></Ico>],
  ["Lupa", <Ico>{lens(8, 7)}</Ico>],
  ["Zoom de zona", <Ico><rect x="1" y="6" width="10" height="9" stroke="#2a6ad0" strokeDasharray="2 1" />{lens(10, 6)}</Ico>],
  ["Alerta en objeto", <Ico><path d="M1 3h12M11 1l4 4m0-4l-4 4" stroke="#1414e0" />{bell}<path d="M13 7v8l2-2 1 3 1-.5-1-3h2z" fill="#fff" stroke="#555" strokeWidth=".7" /></Ico>],
  ["Alertas", <Ico>{bell}<path d="M2.500 3l-1 3M15.500 3l1 3" stroke="#b09000" /></Ico>],
  ["Extensión Fibonacci", <Ico><path d="M1 10L4 3L7 11H12" stroke="#222" strokeWidth="1.300" /><path d="M7 6h10" stroke="#f08040" strokeDasharray="2 1" /><Plus x={2} y={12} />{glyph(13, 15, "F", 8)}</Ico>],
  ["Retroceso Fibonacci", <Ico><path d="M3 6h12M3 8h12" stroke="#f08040" strokeDasharray="2 1" /><path d="M3 11h9" stroke="#1414e0" strokeDasharray="2 1" />{glyph(13, 14, "F", 8)}</Ico>],
  ["Rectángulo azul", rectTool("#3c78ff", 0.05)],
  ["Rectángulo rojo", rectTool("#e02020", 0.25)],
  ["Flecha", <Ico><path d="M3 15L14 4" stroke="#000" strokeWidth="1.600" /><path d="M10 3h6v6z" fill="#000" /><circle cx="3.500" cy="14.500" r="2" fill="#000" /></Ico>],
  ["Texto", <Ico><path d="M2 2h14v10l-4 4H2z" fill="#8fb8ec" stroke="#6a9ade" />{glyph(5.5, 13, "T", 11, "#222")}</Ico>],
  ["Comentario", <Ico><circle cx="9" cy="8" r="7" fill="#8fb8ec" stroke="#6a9ade" /><path d="M9 15l1 3 2-4" fill="#8fb8ec" />{glyph(5.5, 12, "T", 11, "#0a6a0a")}</Ico>],
  ["Segmento", <Ico><path d="M5 13L13 5" stroke="#222" strokeWidth="1.200" /><circle cx="4" cy="14" r="2" stroke="#222" /><circle cx="14" cy="4" r="2" stroke="#222" /></Ico>],
  ["Semirrecta lima", ray("#5cf05c")],
  ["Semirrecta verde", ray("#2eb02e")],
  ["Semirrecta verde oscuro", ray("#0c7a0c")],
  ["Semirrecta roja", ray("#ff1010")],
  ["Regla", <Ico><path d="M2 13L13 1l4 4L6 17z" fill="#a8b8c0" stroke="#4a5a62" /><path d="M6 9l2 2M9 6l2 2M11 3l2 2" stroke="#4a5a62" /></Ico>],
  ["Zigzag", <Ico><rect x="1" y="1" width="16" height="8" fill="#86bca4" /><rect x="1" y="9" width="16" height="8" fill="#bca4b0" /><path d="M1 2h16" stroke="#2a8a2a" strokeDasharray="1 1" /><path d="M1 16h16" stroke="#d02020" strokeDasharray="1 1" /><path d="M1 13l4-7 4 7 7-9" stroke="#c8dcff" /></Ico>],
  ["Elipse roja", ellipse("#f01818")],
  ["Elipse marrón", ellipse("#8a5a18")],
  ["Elipse verde oscuro", ellipse("#0c7a0c")],
  ["Elipse lima", ellipse("#18d818")],
  ["Recta negra", diag("#222", 1.2)],
  ["Recta verde", diag("#2eb02e", 1.8)],
  ["Recta roja", diag("#ff1010", 2)],
  ["Horizontal negra", hline("#222", 1.2)],
  ["Horizontal salmón", hline("#ff8c80", 2)],
  ["Horizontal lima", hline("#00f000", 2)],
  ["Horizontal verde oscuro", hline("#0c7a0c", 2)],
  ["Horizontal roja", hline("#ff1010", 2)],
  ["Horizontal azul", hline("#6496ff", 2)],
  ["Horizontal marino", hline("#0c0ca0", 2)],
  ["Vertical", <Ico><path d="M9 0V18" stroke="#111" strokeWidth="1.400" /></Ico>],
  ["Ángulo", <Ico><path d="M15 3L1 14H16" stroke="#e06a6a" strokeWidth="1.200" /><path d="M8 8q3 2 2 6" stroke="#1414e0" />{glyph(12, 10, "α", 7)}</Ico>],
  ["Círculo", <Ico><circle cx="9" cy="10" r="6" stroke="#f09050" strokeWidth="1.300" /><Plus x={9} y={10} /><Plus x={14.5} y={4} /></Ico>],
  ["Ondas 1-5", <Ico><path d="M1 12L5 4L8 14L13 2L16 11" stroke="#78aaff" />{glyph(0, 11, "1", 5)}{glyph(3, 6, "3+", 6)}{glyph(4, 17, "+2", 6)}{glyph(11, 5, "5+", 6)}{glyph(11, 12, "+4", 6)}</Ico>],
  ["Ondas abc", <Ico><path d="M3 3L15 15M3 15L15 3" stroke="#78aaff" />{glyph(8, 5, "+b", 7)}{glyph(0, 15, "a+", 7)}{glyph(9, 17, "c+", 7)}</Ico>],
  ["Aceptar", <Ico><path d="M2 10l3-2 3 3 7-9 2 2-9 13z" fill="#50d850" stroke="#1f8a1f" /></Ico>],
  ["Me gusta", <Ico><path d="M2 8h4v8H2zM6 9l4-3 0-4 2-.5 1 3-.5 3H17v3l-1 5-2 1H6z" fill="#50d850" stroke="#1f8a1f" /></Ico>],
  ["Eliminar", <Ico><path d="M2 4l3-2 4 4 4-4 3 2-4 5 4 5-3 2-4-4-4 4-3-2 4-5z" fill="#f01414" stroke="#a80808" /></Ico>],
  ["Aviso", <Ico><path d="M9 1l8 15H1z" fill="#ffb020" stroke="#a86c00" /></Ico>],
];

/* ---------- chart parts ---------- */
const Grid = ({ ys, top, bottom }) => (
  <g stroke="#dcdcdc" strokeDasharray="1 4">
    {ys.map((y) => (
      <line key={y} x1="28" x2="1875" y1={y} y2={y} />
    ))}
    {YEARS.map((yr, i) => (
      <line key={yr} x1={mx(i * 12) - 0.5} x2={mx(i * 12) - 0.5} y1={top} y2={bottom} />
    ))}
  </g>
);

const Segments = ({ pts, width, color }) => (
  <g strokeWidth={width} strokeLinecap="round">
    {pts.slice(1).map((p, i) => (
      <line key={i} x1={pts[i][0]} y1={pts[i][1]} x2={p[0]} y2={p[1]} stroke={color(pts[i], p, i)} />
    ))}
  </g>
);

const Between = ({ a, b, up, down, opacity }) => {
  const cells = [];
  for (let x = 28; x < END; x += 4) {
    const x2 = Math.min(x + 4, END);
    const [a1, a2, b1, b2] = [at(a, x), at(a, x2), at(b, x), at(b, x2)];
    cells.push(<polygon key={x} points={`${x},${a1} ${x2},${a2} ${x2},${b2} ${x},${b1}`} fill={a1 + a2 < b1 + b2 ? up : down} />);
  }
  return (
    <g fillOpacity={opacity} shapeRendering="crispEdges">
      {cells}
    </g>
  );
};

const Triangle = ({ x, y, up, size = 5, fill }) => (
  <polygon points={up ? `${x - size},${y + size} ${x + size},${y + size} ${x},${y - size}` : `${x - size},${y - size} ${x + size},${y - size} ${x},${y + size}`} fill={fill} />
);

const lagged = (pts, weight) => {
  const out = [];
  let v = pts[0][1];
  for (let x = 28; x <= END; x += 4) {
    v += (at(pts, x) - v) * weight;
    out.push([x, Math.round(v * 10) / 10]);
  }
  return out;
};

/* the average goes from brown to green or red as its trend gathers strength */
const mix = (a, b, t) => a.map((v, i) => Math.round(v + (b[i] - v) * t));
const BROWN = [74, 46, 0];
const trendColor = (s) => {
  const t = Math.min(1, Math.abs(s) / 1.9);
  const [mid, full] = s > 0 ? [[0, 120, 0], [0, 255, 0]] : [[125, 0, 0], [255, 0, 0]];
  const c = t < 0.2 ? mix(BROWN, mid, t / 0.2) : mix(mid, full, (t - 0.2) / 0.8);
  return `rgb(${c.join(",")})`;
};
const maColor = (() => {
  let s = 1.4;
  return MA.slice(1).map((p, i) => {
    const slope = (MA[i][1] - p[1]) / (p[0] - MA[i][0]);
    s = s * 0.68 + slope * 0.32;
    return trendColor(s);
  });
})();

const NOTES = [
  ["5", 91, 57, 12, 16, "s"], ["[1]", 130, 48, 23, 24, "l"], ["B", 338, 186, 13, 17, "s"], ["A", 141, 541, 14, 16, "s"],
  ["C", 1121, 598, 14, 17, "s"], ["[2]", 1131, 594, 23, 23, "l"], ["v", 1252, 118, 17, 21], ["[1]", 1270, 118, 20, 21],
  ["(A) ?", 1285, 115, 35, 23, "l"], ["iii", 1244, 303, 17, 21, "t"], ["iv", 1265, 405, 18, 21], ["i", 1145, 466, 13, 21, "t"],
  ["ii", 1180, 530, 14, 21, "t"], ["b", 1419, 283, 16, 21], ["a", 1382, 405, 16, 21], ["c ?", 1603, 456, 24, 20],
  ["[2 ?]", 1600, 476, 29, 21], ["(B) ?", 1707, 520, 34, 23, "l"], ["(2) ?", 1743, 521, 34, 23, "l"],
];

const Note = ({ n: [text, x, y, w, h, kind] }) => {
  const size = kind === "l" || kind === "s" ? 12 : 11;
  return (
    <g>
      <rect x={x + 0.5} y={y + 0.5} width={w} height={h} rx={kind === "s" ? 0 : 3} fill="#fff" fillOpacity={kind === "l" ? 0.3 : 0.8} stroke="#5a92ff" strokeWidth="1.2" />
      <text x={x + w / 2 + 0.5} y={y + h / 2 + size * 0.4} textAnchor="middle" fontSize={size} fontWeight="normal" fill={kind === "s" ? "#4a88ff" : kind === "t" ? "#2a70b0" : "#101018"}>
        {text}
      </text>
    </g>
  );
};

const FibLabel = ({ x, y, fill, children }) => (
  <text x={x} y={y} textAnchor="middle" fontSize="9" fontWeight="bold" fill={fill}>
    {children}
  </text>
);

const PriceChart = () => (
  <Plot viewBox="28 23 1847 648" preserveAspectRatio="none" fontFamily={FONT} role="img" aria-label="Crudo EE.UU. mensual">
    <Grid ys={Array.from({ length: 16 }, (_, i) => Math.round(23.5 + i * 40.6) + 0.5)} top={23} bottom={671} />
    <polygon points={toPoly([...BAND_TOP, ...[...BAND_BOTTOM].reverse()])} fill="#00ffff" fillOpacity=".25" />
    <rect x="98" y="503" width="1046" height="65" fill="#a06a40" fillOpacity=".21" />
    <rect x="98" y="568" width="1046" height="65" fill="#c8d8ff" fillOpacity=".26" />
    <rect x="1296" y="398" width="357" height="58" fill="#3232d2" fillOpacity=".16" />
    <rect x="1296" y="456" width="357" height="71" fill="#32ff32" fillOpacity=".12" />
    <g strokeDasharray="1 3" stroke="#cfcfcf">
      <path d="M98 633L1141 79M1296 643L1650 155" fill="none" />
    </g>
    <path d="M98 502.5H1144" stroke="#6af06a" strokeWidth="1.3" strokeDasharray="20 8" />
    <path d="M98 567.5H1144" stroke="#8a4a10" strokeDasharray="5 3" />
    <path d="M98 633.5H1144" stroke="#7c98e0" strokeDasharray="1 2" />
    <path d="M1296 397.5H1653" stroke="#f08850" strokeDasharray="1 2" />
    <path d="M1296 455.5H1653" stroke="#3434d8" strokeWidth="1.2" strokeDasharray="20 8" />
    <path d="M1296 526.5H1653" stroke="#6af06a" strokeWidth="1.3" strokeDasharray="20 8" />

    <Between a={MA} b={MA_DASH} up="#2ca02c" down="#ff2020" opacity=".19" />
    <polyline points={toPoly(MA_DASH)} fill="none" stroke="#990808" strokeWidth="1.7" strokeDasharray="6 5" />
    {TREND.map(([c, pts]) => (
      <polyline key={pts} points={pts} fill="none" stroke={TREND_COLORS[c]} strokeWidth="4" strokeDasharray="8 7" />
    ))}
    <Segments pts={MA} width={3.6} color={(a, b, i) => maColor[i]} />
    {DOTS.map(([x, y]) => (
      <circle key={x} cx={x} cy={y} r="3.5" fill="#a01818" fillOpacity=".55" />
    ))}
    {CANDLES.map((c, i) => {
      const x = mx(FIRST + i) - 0.5;
      return (
        <g key={i} stroke="#000" strokeWidth="1">
          <line x1={x} x2={x} y1={c.wt} y2={c.wb} />
          <rect x={x - 2} y={c.bt + 0.5} width="4" height={Math.max(0.5, c.bb - c.bt - 0.5)} fill={CANDLE_COLORS[c.c]} />
        </g>
      );
    })}
    <path d="M28 384H1875" stroke="#008000" strokeWidth="4" />
    <polyline points="28,286 98,82 150,536 345,207 1129,596" fill="none" stroke="#6c9cff" strokeWidth="1.1" />
    <path d="M28 305L33 289L47 284L62 260L91 104M927 410L947 395L962 374M1231 374L1281 287M1289 265L1303 210" fill="none" stroke="#b02020" />
    <path d="M134 493L142 501M657 456L722 487L744 520M1392 399L1564 428" fill="none" stroke="#28982c" />
    <path d="M1274 152.5H1875" stroke="#2eb02e" strokeWidth="3" />
    <path d="M1711 439L1875 317" stroke="#111" strokeWidth="2" strokeDasharray="2 4" />
    <rect x="27.5" y="369.5" width="37" height="13" fill="#fff" stroke="#008000" />
    <text x="30" y="380" fontSize="9" fontWeight="bold" fill="#008000">7.108,0</text>
    <text x="1276" y="149" fontSize="9" fontWeight="bold" fill="#2eb02e">12.820,6</text>
    <FibLabel x={621} y={499} fill="#6ae86a">76,40 %</FibLabel>
    <FibLabel x={621} y={564} fill="#8a4a10">88,20 %</FibLabel>
    <FibLabel x={621} y={630} fill="#8aa4d8">100,00 %</FibLabel>
    <FibLabel x={1473} y={394} fill="#f08850">50,00 %</FibLabel>
    <FibLabel x={1473} y={452} fill="#3434d8">61,80 %</FibLabel>
    <FibLabel x={1473} y={523} fill="#5ee85e">76,40 %</FibLabel>
    <path d="M163 669H1427" stroke="#50b850" strokeWidth="1.5" />
    <path d="M1427 670H1875" stroke="#f0a0a0" strokeDasharray="5 3" />
    <path d="M1245 667.5H1420" stroke="#50b850" strokeDasharray="4 3" />
    <path d="M236 668.5H1875" stroke="#f01010" strokeWidth="1.3" strokeDasharray="20 8" />
    {NOTES.map((n, i) => (
      <Note key={i} n={n} />
    ))}
  </Plot>
);

const SLOW_LAG = lagged(TRAIN_SLOW, 0.2);
const FAST_LAG = lagged(TRAIN_FAST, 0.55);

const TrainChart = () => (
  <Plot viewBox="28 672 1847 87" preserveAspectRatio="none" role="img" aria-label="Sistema de trenes">
    <Grid ys={[708.5, 724.5]} top={672} bottom={759} />
    <rect x="28" y="678" width={END - 28} height="15" fill="#d8f4d4" />
    <rect x="28" y="740" width={END - 28} height="14" fill="#fddcd8" />
    <path d={`M28 678.5H${END}M28 693.5H${END}M28 739.5H${END}M28 754.5H${END}`} stroke="#000" />
    <path d={`M28 716.5H${END}`} stroke="#1414a8" strokeWidth="1.5" strokeDasharray="4 4" />
    <rect x="28" y="686" width="72" height="8" fill="#4a9a4a" fillOpacity=".6" />
    <Between a={TRAIN_SLOW} b={SLOW_LAG} up="#3c3cb0" down="#d050d0" opacity=".3" />
    <Between a={TRAIN_FAST} b={FAST_LAG} up="#50b850" down="#e85050" opacity=".3" />
    <polyline points={toPoly(SLOW_LAG)} fill="none" stroke="#222" strokeWidth="2.5" strokeDasharray="5 5" />
    <Segments pts={TRAIN_SLOW} width={3.2} color={(a, b) => (b[1] > a[1] ? "#ff0000" : "#00009c")} />
    <polyline points={toPoly(FAST_LAG)} fill="none" stroke="#222" strokeWidth=".9" strokeDasharray="4 3" />
    <Segments pts={TRAIN_FAST} width={1.4} color={(a, b) => (b[1] > a[1] ? "#e02828" : "#000")} />
    {TRAIN_UP.map(([x, y]) => <Triangle key={x} x={x} y={y} up size={4.5} fill="#0000b8" />)}
    {TRAIN_DOWN.map(([x, y]) => <Triangle key={x} x={x} y={y} size={4.5} fill="#b40000" />)}
  </Plot>
);

const zone = (level, above) => {
  const out = [];
  for (let x = 28; x <= END; x += 2) {
    const y = at(WILLY, x);
    out.push([x, above ? Math.min(y, level) : Math.max(y, level)]);
  }
  return `28,${level} ${toPoly(out)} ${END},${level}`;
};

const WillyChart = () => (
  <Plot viewBox="28 760 1847 82" preserveAspectRatio="none" role="img" aria-label="Willy Doc">
    <Grid ys={[780.5, 794.5, 808.5, 823.5]} top={760} bottom={842} />
    {WILLY_BANDS.map(([c, a, b]) => (
      <rect key={a} x={a} width={b - a} y="760" height="82" fill={WILLY_COLORS[c]} />
    ))}
    <polygon points={zone(784, true)} fill="#3c8c3c" fillOpacity=".45" />
    <polygon points={zone(819, false)} fill="#701010" fillOpacity=".4" />
    <path d={`M28 765.5H${END}M28 837.5H${END}`} stroke="#000" strokeDasharray="5 3" />
    <path d={`M28 783.5H${END}`} stroke="#0c0c90" strokeWidth="2" />
    <path d={`M28 801.5H${END}`} stroke="#0c0c90" strokeWidth="1.5" strokeDasharray="5 4" />
    <path d={`M28 819.5H${END}`} stroke="#c41010" strokeWidth="2" />
    <Segments
      pts={WILLY}
      width={3.2}
      color={(a, b) => {
        const m = (a[1] + b[1]) / 2;
        if (m < 783) return "#00c400";
        if (m > 819) return "#940000";
        return b[1] > a[1] ? "#ff9a00" : "#0000d0";
      }}
    />
    {WILLY_UP.map((x) => <Triangle key={x} x={x} y={801} up size={5.5} fill="#0000b0" />)}
    {WILLY_DOWN.map((x) => <Triangle key={x} x={x} y={801} size={5.5} fill="#b00000" />)}
  </Plot>
);

const AwesomeChart = () => {
  const bars = [];
  for (let k = FIRST; k <= LAST; k++) {
    const x = mx(k);
    const v = at(AO, x);
    const prev = at(AO, x - 6);
    const s = at(AO_SIGNAL, x);
    const fall = at(AO_SIGNAL, x - 6) < s;
    const color = v < 890 ? (v > prev ? "#ff00f0" : "#0000ff") : v > prev ? "#ff0000" : "#009c94";
    bars.push(
      <g key={k}>
        <rect x={x - 3} width="6" y={Math.min(s, 890)} height={Math.abs(s - 890)} fill={fall ? "#ffd2d2" : "#d2ffd2"} />
        <rect x={x - 3} width="1" y={Math.min(s, 890)} height={Math.abs(s - 890)} fill={fall ? "#e8a0a0" : "#98d898"} />
        <rect x={x - 2.5} width="5" y={Math.min(v, 890)} height={Math.abs(v - 890)} fill={color} stroke="#303050" strokeWidth=".6" />
      </g>
    );
  }
  return (
    <Plot viewBox="28 843 1847 96" preserveAspectRatio="none" role="img" aria-label="Awesome Evolution Doc">
      <Grid ys={[857.5, 873.5, 907.5, 923.5]} top={843} bottom={939} />
      {bars}
      <path d={`M28 890.5H${END}`} stroke="#1010ff" strokeWidth="1.6" />
      <Segments pts={AO} width={3.4} color={(a, b) => (b[1] > a[1] ? "#b000b0" : "#000034")} />
      <Segments pts={AO_SIGNAL} width={3.4} color={(a, b) => (b[1] > a[1] ? "#ff9a00" : "#60ff60")} />
      {AO_UP.map(([x, y]) => <Triangle key={x} x={x} y={y} up fill="#00f0f0" />)}
      {AO_DOWN.map(([x, y]) => <Triangle key={x} x={x} y={y} fill="#f4f400" />)}
    </Plot>
  );
};

const ForceChart = () => {
  const bars = [];
  for (let k = FIRST; k <= LAST; k++) {
    const x = mx(k);
    const y = Math.round(at(FORCE, x));
    const band = FORCE_BANDS.find(([, a, b]) => x >= +a && x < +b) || ["y"];
    const blue = "pgd".includes(band[0]);
    bars.push(
      <g key={k}>
        <rect x={x - 4} width="7" y={y} height={Math.max(1, 993 - y)} fill={blue ? "#2828d8" : "#d02828"} fillOpacity=".65" />
        <path d={`M${x - 4} ${y + 0.5}h7M${x - 3.5} ${y}V993`} stroke={blue ? "#1010b0" : "#a01820"} fill="none" />
      </g>
    );
  }
  return (
    <Plot viewBox="28 940 1847 55" preserveAspectRatio="none" role="img" aria-label="Barra Fuerza Fondo Mercado">
      <Grid ys={[962.5]} top={940} bottom={995} />
      {FORCE_BANDS.map(([c, a, b]) => (
        <rect key={a} x={a} width={b - a} y="940" height="55" fill={FORCE_COLORS[c]} />
      ))}
      {bars}
      <path d={`M28 989.5H${END}`} stroke="#000" />
      <path d="M28 992.5H840M1003 992.5H1322" stroke="#1414c0" strokeWidth="1.5" />
      <path d="M840 993H1003M1322 993H1627" stroke="#e02020" strokeWidth="1.5" />
    </Plot>
  );
};

const Axis = ({ top, h, ticks, labels }) => (
  <Scale viewBox={`1875 ${top} 41 ${h}`} preserveAspectRatio="none" fontFamily={FONT}>
    <path d={`M1875.5 ${top}V${top + h}`} stroke={EDGE} />
    {ticks.map((y) => (
      <path key={y} d={`M1875 ${y}h4`} stroke={EDGE} />
    ))}
    {labels.map(([text, y, color, w, x = 1881]) => (
      <g key={text + y}>
        {w && <rect x={x - 1.5} y={y - 6.5} width={w} height="13" fill="#f4f6f7" stroke={EDGE} />}
        <text x={x} y={y + 3.5} fontSize={w ? 9 : 10} fontWeight="bold" fill={color || "#111"}>
          {text}
        </text>
      </g>
    ))}
  </Scale>
);

const priceLabels = Array.from({ length: 16 }, (_, i) => [`${16 - i}.000`, Math.round(23.3 + i * 40.6) + (i ? -1 : 4)]);
const priceTicks = Array.from({ length: 16 }, (_, i) => Math.round(23.3 + i * 40.6) + 0.5);

const Panel = ({ title, swatch, height, axis, children }) => (
  <Row $h={height}>
    {children}
    <Axis {...axis} />
    <Tabs>
      <CloseTab aria-label={`Cerrar ${title}`}>
        <CloseDot />
      </CloseTab>
      <PanelTitle>
        <Swatch $fill={swatch} />
        {title}
      </PanelTitle>
    </Tabs>
  </Row>
);

const HALF = "linear-gradient(90deg, #7b919d 40%, #000 40%)";
const RAINBOW = "linear-gradient(90deg, #0ff 0 25%, #222 25% 38%, #f0f 38% 60%, #fa0 60% 80%, #0a0 80%)";

export default function App() {
  return (
    <>
      <Global />
      <Page>
        <TopBar>
          <Group $w={23} $pad={2}>
            <Ico w={16} h={16}>
              <path d="M3 6v9M8 4v9M13 1v9" stroke="#1f7a2a" />
              <path d="M1.500 8h3v5h-3zM6.500 6h3v5h-3zM11.500 3h3v5h-3z" fill="#34a03c" />
            </Ico>
          </Group>
          <Group $w={16} $pad={4}>
            <Ico w={7} h={16}>
              <path d="M1 3q0-2 2-2t2 2v3q0 1-2 1t-2-1zM1 10q0-1 2-1t2 1v3q0 2-2 2t-2-2z" stroke="#5e747f" strokeWidth="1.3" />
            </Ico>
          </Group>
          <Group $w={35}>
            <MenuButton>CL <Chevron /></MenuButton>
          </Group>
          <Group $w={240} $pad={3}>
            {[["12s", 20], ["144s", 26], ["1m", 18], ["12m", 24], ["56m", 24], ["1h", 16], ["4h", 16], ["D", 12], ["W", 14], ["M", 12], ["Q", 12]].map(([t, w]) => (
              <TimeButton key={t} $w={w} $on={t === "M"}>{t}</TimeButton>
            ))}
          </Group>
          <Group $w={46}>
            <MenuButton>1 mes <Chevron /></MenuButton>
          </Group>
          <Group $w={93} $pad={3}>
            {[["5kU", 23], ["10kU", 29], ["35kU", 28]].map(([t, w]) => (
              <TimeButton key={t} $w={w} $on={t === "10kU"}>{t}</TimeButton>
            ))}
          </Group>
          <Group $w={83} $pad={3}>
            <MenuButton>10 k unidades <Chevron /></MenuButton>
          </Group>
          <Group $w={85}>
            <MenuButton>
              <Ico w={17} h={17}>
                <path d="M1 7q3-6 6-2t8-3" stroke="#d03030" />
                <path d="M1 4q4-4 7 2t8-1" stroke="#2a9a3a" strokeWidth="1.4" />
                <path d="M1 11h3v5H1zM9 12h3v4H9z" fill="#18c030" />
                <path d="M5 12h3v4H5zM13 11h3v5h-3z" fill="#e02020" />
              </Ico>
              Indicadores
            </MenuButton>
          </Group>
          <Group $w={13} $pad={1}>
            <MenuButton aria-label="Más indicadores" $center><Chevron /></MenuButton>
          </Group>
          <Group $w={300} $pad={8} $plain $start>
            <InfoMark>i</InfoMark>
            <StateDot />
            <Change>+0,30 %</Change>
            <DateText>16 ene 2026</DateText>
            <Plain>Crudo EE.UU. (1€)</Plain>
          </Group>
          <Spacer />
          <Group $w={1} $pad={0} />
          <Group $w={20} $pad={1}>
            <Ico w={17} h={17}>
              <path d="M5 13V6q0-4 6-4" stroke="#f05050" strokeWidth="2.2" />
              <path d="M1 9h8l-4 5z" fill="#f05050" />
              <path d="M12 5v6q0 4-6 4" stroke="#20b838" strokeWidth="2.2" />
              <path d="M8 9h8l-4-5z" fill="#20b838" />
            </Ico>
          </Group>
          <Group $w={45} $pad={3} $plain>
            {["M1 8h8", "M3.5 1.5h5v5h-5zM1.5 3.5h5v5h-5z", "M1.5 1.5l7 7m0-7l-7 7"].map((d, i) => (
              <IconButton key={d} $w={12} $h={14} aria-label={["Minimizar", "Restaurar", "Cerrar"][i]}>
                <Ico w={10} h={10}><path d={d} stroke="#6a808c" strokeWidth="1.5" /></Ico>
              </IconButton>
            ))}
          </Group>
        </TopBar>

        <Body>
          <SideBar>
            <SideStrip $h={12}><Chevron up /></SideStrip>
            <ToolList>
              {TOOLS.map(([name, icon], i) => (
                <IconButton key={name} aria-label={name} $on={i === 0}>{icon}</IconButton>
              ))}
            </ToolList>
            <SideStrip $h={11}><Chevron /></SideStrip>
            <SideStrip $h={32} $plain>
              <IconButton aria-label="Configurar plantilla">
                <Ico w={20} h={20}>
                  <rect x="6" y="3" width="9" height="13" fill="#f4f6f7" stroke="#888" />
                  <path d="M8 12l2-4 2 3 2-4" stroke="#c33" />
                  <circle cx="4.5" cy="4.5" r="4" fill="#0c8a1c" />
                  {glyph(3, 7, "1", 7, "#fff")}
                  <path d="M10 12l6 6m1-5l-3 3" stroke="#333" strokeWidth="1.6" />
                </Ico>
              </IconButton>
            </SideStrip>
            <SideStrip $h={22} $plain>
              <IconButton aria-label="Más herramientas">
                <Ico><path d="M2 5h2M7 5h2M12 5h2" stroke="#333" strokeWidth="2" /><path d="M10 11h6l-3 3z" fill="#111" /></Ico>
              </IconButton>
            </SideStrip>
            <SideStrip $h={20} $plain>
              <IconButton aria-label="Dibujo" $h={18} $on>
                <Ico><path d="M2 3l5 12 3-9 4 8" stroke="#2a8a2a" /><path d="M2 12l7-9 5 12" stroke="#d03030" /><path d="M8 15l1-4 5-7 2 1.500-5 7z" fill="#ffc820" stroke="#604000" strokeWidth=".8" /></Ico>
              </IconButton>
            </SideStrip>
          </SideBar>

          <Main>
            <Row>
              <PriceChart />
              <Axis
                top={23}
                h={648}
                ticks={priceTicks}
                labels={[...priceLabels, ["7.216,1", 380, "#a07000", 36], ["6.431,4", 412, "#a01010", 36], ["6.134,8", 424, "#a01010", 36]]}
              />
              <Heading>M<br />Crudo EE.UU. (1€)</Heading>
              <Credit>IT-Finance.com - Tiempo Real</Credit>
              <Tabs>
                <Tab $w={44}>
                  <Ico w={11} h={11}><rect x=".5" y=".5" width="10" height="10" rx="2" fill="#fff" stroke="#bbb" /><path d="M5.5 2v4M2.5 5h6l-3 4z" fill="#e02020" stroke="#e02020" /></Ico>
                  <Ico w={11} h={11}><rect x=".5" y=".5" width="10" height="10" rx="2" fill="#fff" stroke="#bbb" /><path d="M5.5 9v-4M2.5 6h6l-3-4z" fill="#18a028" stroke="#18a028" /></Ico>
                  <CloseDot />
                </Tab>
                <Tab $w={47}><Swatch />Precio</Tab>
                <Tab $w={16}><Ico w={9} h={10}><path d="M0 1.500h2M0 5h2M0 8.500h2M3 1.500h6M3 5h6M3 8.500h6" stroke="#222" strokeWidth="1.3" /></Ico></Tab>
                <Tab><Swatch />Cierre (W)</Tab>
                <Tab><Swatch $fill={EDGE} />Tunel Domenec v4 (t t t t t)</Tab>
                <Tab><Swatch $fill={RAINBOW} />Control Total Doc v.6</Tab>
                <Tab><Swatch $fill="#000" />Multi Avisos (3 f 3 1,5 70 f f)</Tab>
                <Tab><Swatch />DS_CotasHist (1 t t t 3 1 1 f f f f f f f f ...)</Tab>
              </Tabs>
            </Row>
            <Panel
              title="Sistema de trenes Doc v4 (f f)"
              swatch={HALF}
              height={88}
              axis={{
                top: 672, h: 87, ticks: [678.5, 693.5, 708.5, 716.5, 724.5, 739.5, 754.5],
                labels: [["100", 678, "#111", 19], ["80", 693, "#111", 13], ["60", 708], ["50", 711, "#1414b0", 13], ["44,487", 718, "#111", 31], ["20", 736, "#111", 13], ["42,305", 725, "#f01010", 31], ["16,418", 743, "#e02020", 31], ["0", 752, "#111", 8]],
              }}
            >
              <TrainChart />
            </Panel>
            <Panel
              title="Willy Doc (t)"
              swatch={EDGE}
              height={83}
              axis={{
                top: 760, h: 82, ticks: [765.5, 783.5, 794.5, 801.5, 808.5, 819.5, 829.5, 837.5],
                labels: [["0", 766, "#111", 8], ["-40", 793], ["-60", 809], ["-25", 783, "#0c0c90", 16], ["-50", 801, "#0c0c90", 16], ["-75", 818, "#d01010", 16], ["-90,000", 830, "#a02020", 34], ["-100", 835, "#111", 21]],
              }}
            >
              <WillyChart />
            </Panel>
            <Panel
              title="Awesome Evolution Doc"
              swatch={EDGE}
              height={97}
              axis={{
                top: 843, h: 96, ticks: [857.5, 873.5, 890.5, 907.5, 923.5],
                labels: [["4.000", 857], ["2.000", 873], ["0", 884, "#1414c0", 8], ["0", 890, "#009c94", 8], ["-1.011,4", 900, "#e02020", 38], ["-1.211,4", 907, "#ff9a00", 38], ["-4.000", 923]],
              }}
            >
              <AwesomeChart />
            </Panel>
            <Panel
              title="Barra Fuerza Fondo Mercado v4 (f)"
              swatch={HALF}
              height={56}
              axis={{
                top: 940, h: 55, ticks: [962.5, 992.5],
                labels: [["5", 962], ["0,5000", 983, "#111", 31], ["-0,2353", 989, "#f01010", 34]],
              }}
            >
              <ForceChart />
            </Panel>
            <TimeRow>
              <Plot viewBox="28 996 1847 14" preserveAspectRatio="none" fontFamily={FONT}>
                {YEARS.map((y, i) => (
                  <g key={y}>
                    <path d={`M${mx(i * 12) - 0.5} 996v3`} stroke={EDGE} />
                    <text x={mx(i * 12) - 0.5} y="1008" textAnchor="middle" fontSize="9" fontWeight="bold" fill="#111">{y}</text>
                  </g>
                ))}
              </Plot>
              <Scale viewBox="0 0 41 14" preserveAspectRatio="none" />
            </TimeRow>
            <BottomBar>
              <BottomGroup>
                <IconButton $w={20} $h={18} aria-label="Compartir"><Ico><path d="M4 9L13 3M4 9l8 6" stroke="#fff" strokeWidth="1.5" /><circle cx="4" cy="9" r="2.5" fill="#fff" /><circle cx="13" cy="3.5" r="2.5" fill="#fff" /><circle cx="11" cy="14" r="2.5" fill="#fff" /><path d="M13 14h5l-2.500 3z" fill="#111" /></Ico></IconButton>
                <IconButton $w={20} $h={18} aria-label="Comentarios"><Ico><rect x="3" y="2" width="8" height="10" fill="#6aa0e8" stroke="#fff" /><path d="M6 6h10v7h-6l-2 3v-3H6z" fill="#3c7ce0" stroke="#2a60b8" /><path d="M8 9.500h6" stroke="#fff" strokeDasharray="1.5 1" strokeWidth="1.5" /></Ico></IconButton>
                <IconButton $w={20} $h={18} aria-label="Informe"><Ico><rect x="4" y="2" width="10" height="14" fill="#f4f4f4" stroke="#555" /><path d="M6 5h6M6 7h6" stroke="#333" /><path d="M5 14l3-4 2 3 3-4" stroke="#18a028" /><path d="M8 9l4 5" stroke="#e02020" /></Ico></IconButton>
                <IconButton $w={20} $h={18} aria-label="Libro de órdenes"><Ico><path d="M2 3h8v2H2zM2 10h7v2H2zM4 14h6v2H4z" fill="#18a028" stroke="#18a028" /><path d="M9 6h7v2H9zM9 12h6v2H9z" fill="#e04040" stroke="#e04040" /><path d="M9.500 1v16" stroke="#555" /></Ico></IconButton>
                <IconButton $w={20} $h={18} aria-label="Ventanas"><Ico><rect x="2" y="2" width="10" height="9" fill="#fff" stroke="#2a60b8" /><path d="M2 3h10" stroke="#2a60b8" strokeWidth="2" /><rect x="6" y="7" width="11" height="9" fill="#fff" stroke="#2a60b8" /><path d="M6 8h11" stroke="#2a60b8" strokeWidth="2" /><path d="M7 14l3-3 3 2 3-2" stroke="#18a028" /></Ico></IconButton>
                <IconButton $w={12} $h={18} aria-label="Contraer"><Ico w={10} h={10}><path d="M4.500 1.500L1.500 5l3 3.500M8.500 1.500L5.500 5l3 3.500" stroke="#334" /></Ico></IconButton>
              </BottomGroup>
              <ScrollBar>
                <ScrollEnd $first aria-label="Desplazar a la izquierda"><Chevron dir="l" /></ScrollEnd>
                <Track $grow={856} />
                <Track $grow={736} $thumb />
                <ScrollEnd aria-label="Desplazar a la derecha"><Chevron dir="r" /></ScrollEnd>
              </ScrollBar>
              <BottomGroup $right>
                <IconButton $h={18} aria-label="Deshacer"><Ico><path d="M7 3L3 7l4 4M3 7h7q5 1 4 8" stroke="#2478e0" strokeWidth="2.2" /></Ico></IconButton>
                <IconButton $h={18} aria-label="Rehacer"><Ico><path d="M11 3l4 4-4 4M15 7H8q-5 1-4 8" stroke="#88b4d4" strokeWidth="2.2" /></Ico></IconButton>
                <IconButton $h={18} aria-label="Ajustes"><Ico><rect x="10" y="2" width="6" height="13" fill="#18b838" /><rect x="2" y="8" width="6" height="8" fill="#e04040" /><path d="M4 14l6-6M10 8q-2-4 2-5l0 3 2 0q1 3-3 3" stroke="#fff" strokeWidth="2.6" /><path d="M4 14l6-6M10 8q-2-4 2-5l0 3 2 0q1 3-3 3" stroke="#333" strokeWidth=".9" /></Ico></IconButton>
                <IconButton $h={18} aria-label="Ajustar zoom"><Ico>{lens(7, 6)}<path d="M15.500 2v9M14 4l1.500-2L17 4M14 9l1.500 2L17 9M2 15.500h9M4 14l-2 1.500L4 17" stroke="#1450e0" /></Ico></IconButton>
                <IconButton $h={18} aria-label="Alejar"><Ico>{lens()}<path d="M5 7h4" stroke="#1450e0" strokeWidth="1.5" /></Ico></IconButton>
                <IconButton $h={18} aria-label="Acercar"><Ico>{lens()}<path d="M5 7h4M7 5v4" stroke="#1450e0" strokeWidth="1.5" /></Ico></IconButton>
                <IconButton $w={18} $h={18} aria-label="Mostrar panel"><Ico w={16}><path d="M1 4h14M1 6h14" stroke="#333" strokeWidth="1.2" strokeDasharray="2 1" /><path d="M8 8v7M5.500 12L8 15l2.500-3" stroke="#1450e0" strokeWidth="1.5" /></Ico></IconButton>
              </BottomGroup>
            </BottomBar>
          </Main>
        </Body>
      </Page>
    </>
  );
}
